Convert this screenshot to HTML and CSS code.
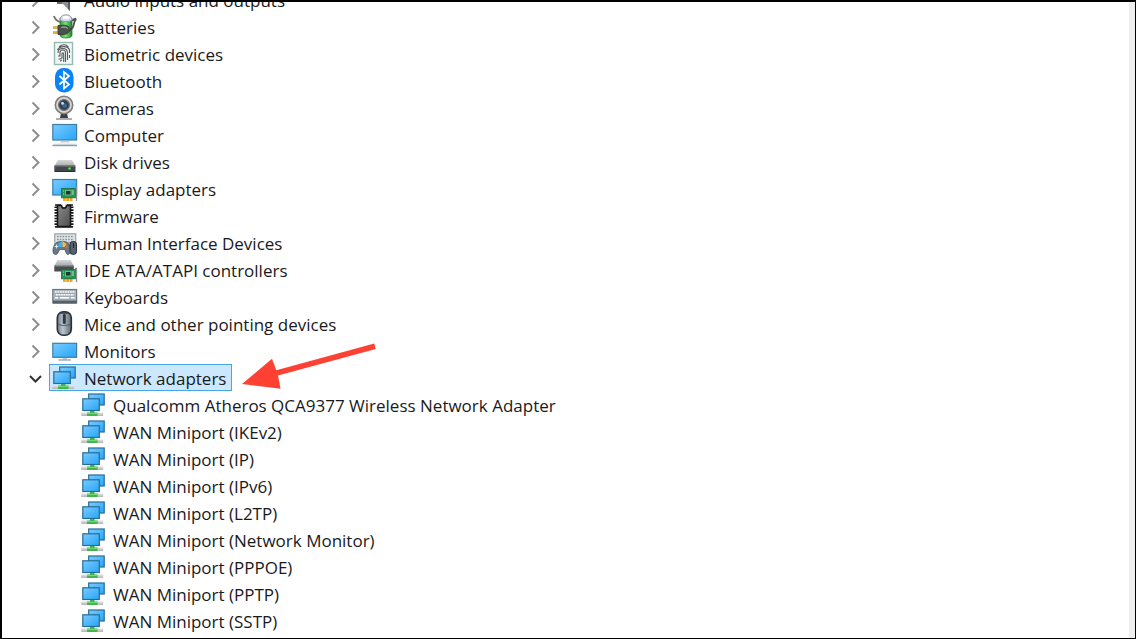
FILE: index.html
```html
<!DOCTYPE html>
<html lang="en">
<head>
<meta charset="utf-8">
<title>Device Manager</title>
<link rel="stylesheet" href="styles.css">
</head>
<body>
<svg class="sprite" aria-hidden="true">
  <defs>
    <linearGradient id="screen" x1="0" y1="0" x2="1" y2="1"><stop offset="0" stop-color="#7ecbff"/><stop offset=".5" stop-color="#4fb8fc"/><stop offset="1" stop-color="#2ba4f5"/></linearGradient>
    <linearGradient id="metal" x1="0" y1="0" x2="0" y2="1"><stop offset="0" stop-color="#d8d8d8"/><stop offset="1" stop-color="#a9abac"/></linearGradient>
    <linearGradient id="dark" x1="0" y1="0" x2="1" y2="1"><stop offset="0" stop-color="#8b8b8b"/><stop offset="1" stop-color="#4c4c4c"/></linearGradient>
    <linearGradient id="cell" x1="0" y1="0" x2="1" y2="0"><stop offset="0" stop-color="#2c9a33"/><stop offset=".45" stop-color="#7be07a"/><stop offset="1" stop-color="#1c8428"/></linearGradient>
    <linearGradient id="shell" x1="0" y1="0" x2="1" y2="0"><stop offset="0" stop-color="#6f7b86"/><stop offset=".4" stop-color="#b9c5d0"/><stop offset="1" stop-color="#5d6872"/></linearGradient>
    <linearGradient id="pipe" x1="0" y1="0" x2="0" y2="1"><stop offset="0" stop-color="#e4e4e4"/><stop offset="1" stop-color="#b4b4b4"/></linearGradient>
  </defs>
  <symbol id="chevron" viewBox="0 0 20 25"><path d="M6.500 7.500l6 6-6 6" fill="none" stroke="#8e8e8e" stroke-width="2"/></symbol>
  <symbol id="chevron-open" viewBox="0 0 20 25"><path d="M4 11l5.500 5.500L15 11" fill="none" stroke="#333" stroke-width="2"/></symbol>
  <symbol id="audio" viewBox="0 0 26 25">
    <path d="M5 8h5l8-7v23l-7-7H5z" fill="#8f9295"/><path d="M5 8h5v9H5z" fill="#686b6e"/><path d="M16 3l2-2v23l-2-2z" fill="#5b5e61"/>
  </symbol>
  <symbol id="battery" viewBox="0 0 26 25">
    <path d="M8 4v17c0 4 12 4 12 0V4z" fill="url(#cell)" stroke="#237b2c" stroke-width=".8"/>
    <path d="M8 6c0-7 12-7 12 0-2 2-10 2-12 0z" fill="#d9dcf2" stroke="#85889b" stroke-width=".8"/>
    <ellipse cx="14" cy="3.300" rx="3.500" ry="1.500" fill="#fff"/>
    <path d="M19 15c4-2 2-7 4.500-9 1-2-2-1.500-3 1" fill="none" stroke="#48504a" stroke-width="1.800"/>
    <path d="M2 2c1 4 3 5 6 6" fill="none" stroke="#6a706b" stroke-width="1.800"/>
    <path d="M1 13.500h6M1 18.500h6" stroke="#c59820" stroke-width="2.400"/>
    <path d="M1 13h5M1 18h5" stroke="#f2cc54" stroke-width="1"/>
    <path d="M6 11.500h3c5-1 8 1 10 3.500-2 4-5 6-10 5.500H6z" fill="#4b504d" stroke="#2e322f" stroke-width=".8"/>
    <path d="M9 13.500c3-1 5-.5 7 1" fill="none" stroke="#9a9f9b" stroke-width="1.300"/>
  </symbol>
  <symbol id="finger" viewBox="0 0 26 25">
    <rect x="2.500" y="1.500" width="18" height="22" fill="#f3f8f7" stroke="#93b9b1" stroke-width="1.400"/>
    <g fill="none" stroke="#555b5b" stroke-width="1.100">
      <path d="M7 6c3-3 7-3 9.500 0M5.500 9c2-4 10-5 12 0v3M6 12c0-6 9.500-6 9.500 0v7M6 15h2v-3c0-4 5.500-4 5.500 0v9M6.500 18H8l2-1v-4c0-1.500 1.700-1.500 1.700 0v8M8 20l2-1M17.500 14v3"/>
    </g>
  </symbol>
  <symbol id="bluetooth" viewBox="0 0 26 25">
    <rect x="3" y="0" width="18.500" height="24.500" rx="8.500" fill="#0a84f5"/>
    <path d="M7.500 8l9.500 8.500-5 4V4l5 4-9.500 8.500" fill="none" stroke="#fff" stroke-width="1.700"/>
  </symbol>
  <symbol id="camera" viewBox="0 0 26 25">
    <path d="M9 18h6l1 5H8z" fill="#3e3e3e"/><path d="M4 24h16" stroke="#8d8d8d" stroke-width="1.400"/>
    <circle cx="12" cy="10" r="8.700" fill="#d3d4d4" stroke="#7d7d7d" stroke-width="1.600"/>
    <circle cx="12" cy="10" r="5.400" fill="#343b43" stroke="#6c7073" stroke-width="1.300"/>
    <circle cx="12.500" cy="10.500" r="2.500" fill="#38668d"/><circle cx="10.500" cy="8.300" r="1.500" fill="#b9d7ec"/>
  </symbol>
  <symbol id="computer" viewBox="0 0 26 25">
    <rect x=".8" y="2.500" width="23.800" height="15.500" fill="url(#screen)" stroke="#3e7ea5" stroke-width="1.200"/>
    <path d="M9 19h8l1 1.500H8z" fill="#c5ced4"/><path d="M2.500 21.500h20.500l1.500 1.500H1z" fill="#dce4e9"/><path d="M.5 23.500h24.500" stroke="#8ba1af" stroke-width="1.500"/>
  </symbol>
  <symbol id="disk" viewBox="0 0 26 25">
    <path d="M6 11h14l3.500 6H2.500z" fill="url(#metal)"/><rect x="2.300" y="16.500" width="21.200" height="6.500" rx=".6" fill="#45484a"/>
    <path d="M2.500 17h20.800" stroke="#7d8082"/><circle cx="17.500" cy="19.500" r="1.200" fill="#43ed43"/><path d="M3 22.500h20" stroke="#292b2c"/>
  </symbol>
  <symbol id="card" viewBox="0 0 26 25">
    <path d="M11 21.500h9.500V25H11z" fill="#f4a71c"/><path d="M14 22v3M17.500 22v3" stroke="#ffe08a" stroke-width=".8"/>
    <rect x="9.500" y="12.500" width="14" height="9.300" fill="#249254" stroke="#196c40" stroke-width=".8"/>
    <rect x="13.500" y="14.500" width="5.500" height="4.500" fill="#183c2c" stroke="#82bc93" stroke-width=".9"/>
    <path d="M11 15h1M11 18h1M21 14v5" stroke="#9be0a8" stroke-width="1.200"/><path d="M23 11.500h1.500V25" fill="none" stroke="#8a9195" stroke-width="1.300"/>
  </symbol>
  <symbol id="display" viewBox="0 0 26 25">
    <rect x=".8" y="3.500" width="23.800" height="15.500" fill="url(#screen)" stroke="#3e7ea5" stroke-width="1.200"/><use href="#card" width="26" height="25"/>
  </symbol>
  <symbol id="firmware" viewBox="0 0 26 25">
    <path d="M4.500 3.500v20M19.500 3.500v20" stroke="#151515" stroke-width="4" stroke-dasharray="1.600 1.200"/>
    <path d="M5.500 2.500h4c0 3.500 5 3.500 5 0h4v21h-13z" fill="url(#dark)" stroke="#191919" stroke-width="1.600"/>
    <path d="M3 2h6M15 2h6M3 24h18" stroke="#191919" stroke-width="1.500"/>
  </symbol>
  <symbol id="hid" viewBox="0 0 26 25">
    <rect x="2.800" y="3.800" width="21" height="12" fill="#dfe4e7" stroke="#8b959b"/>
    <path d="M5 6.500h17M5 9.500h17M5 12.500h17" stroke="#87929a" stroke-width="1.500" stroke-dasharray="1.600 1.200"/>
    <path d="M4.500 12.500c3-1.500 9-1.500 11 0 2.500 2 3 7 2 11-2 3-4-1-4.500-4H7.500c-1 3-3 7-6 4-1.500-4 .5-9 3-11z" fill="#66788a" stroke="#465462" stroke-width=".8"/>
    <path d="M4.500 14.500v4M2.500 16.500h4" stroke="#dbe4ec" stroke-width="1.200"/>
    <path d="M6.500 13l4-2v6h-4z" fill="#3ab4f1"/><path d="M10.500 11l4 3-2 3h-2z" fill="#f4bd40"/><circle cx="14.500" cy="17" r="1.400" fill="#df633e"/>
    <rect x="18" y="11.500" width="6.500" height="12.800" rx="2.600" fill="#56616b" stroke="#28313a"/><path d="M21.500 13v5" stroke="#1f2429"/>
  </symbol>
  <symbol id="ide" viewBox="0 0 26 25">
    <path d="M5.500 3h13l3 5.500h-19z" fill="url(#metal)"/><path d="M2.300 8.500h19.500v6H2.300z" fill="#4a4d4f"/><path d="M2.500 9h19" stroke="#888b8d"/><use href="#card" width="26" height="25"/>
  </symbol>
  <symbol id="keyboard" viewBox="0 0 26 25">
    <rect x=".8" y="5.500" width="23.800" height="13.500" fill="#b4bcc2" stroke="#697680" stroke-width="1.200"/>
    <path d="M1 18h23.500" stroke="#54616c" stroke-width="3"/>
    <path d="M3 8h20M4 10.800h18" stroke="#fff" stroke-width="1.700" stroke-dasharray="1.700 .8"/><path d="M3 13.800h3M8 13.800h9M19 13.800h3.500" stroke="#fff" stroke-width="1.700"/>
    <path d="M3 9.300h20M3 12.200h20M3 15.200h20" stroke="#8c979f" stroke-width=".7"/>
  </symbol>
  <symbol id="mouse" viewBox="0 0 26 25">
    <rect x="5.300" y=".8" width="14" height="23.400" rx="6" fill="url(#shell)" stroke="#2c3137" stroke-width="1.600"/>
    <path d="M6 13c3 2 9.500 2 12.500 0" fill="none" stroke="#4d5964"/><rect x="10.800" y="3" width="3" height="10" rx="1.300" fill="#33383d"/><path d="M8 2h8.500" stroke="#363b40" stroke-width="1.600"/>
  </symbol>
  <symbol id="monitor" viewBox="0 0 26 25">
    <rect x=".8" y="5.300" width="23.800" height="14" fill="url(#screen)" stroke="#3e7ea5" stroke-width="1.200"/>
    <path d="M10.500 20h4.500v1.500h-4.500z" fill="#bec8ce"/><path d="M6.500 22h12.500" stroke="#97a7b2" stroke-width="1.400"/>
  </symbol>
  <symbol id="network" viewBox="0 0 26 25">
    <rect x="7.700" y="2" width="15.500" height="11" fill="url(#screen)" stroke="#256d96" stroke-width="1.200"/>
    <path d="M.2 20.500h22V24H.2z" fill="url(#pipe)"/>
    <path d="M9 18h4.500v2.500h3V24H6v-3.500h3z" fill="#42b64c"/><path d="M6 21.500h10.500" stroke="#72d878"/>
    <rect x="1.800" y="6.800" width="16.500" height="11.700" fill="url(#screen)" stroke="#256d96" stroke-width="1.200"/>
  </symbol>
</svg>

<main class="window">
  <ul class="tree" role="tree" aria-label="Devices">
    <li class="row" role="treeitem"><button class="toggle" aria-label="Expand Audio inputs and outputs"><svg class="arrow-icon"><use href="#chevron"/></svg></button><span class="label"><svg class="icon"><use href="#audio"/></svg>Audio inputs and outputs</span></li>
    <li class="row" role="treeitem"><button class="toggle" aria-label="Expand Batteries"><svg class="arrow-icon"><use href="#chevron"/></svg></button><span class="label"><svg class="icon"><use href="#battery"/></svg>Batteries</span></li>
    <li class="row" role="treeitem"><button class="toggle" aria-label="Expand Biometric devices"><svg class="arrow-icon"><use href="#chevron"/></svg></button><span class="label"><svg class="icon"><use href="#finger"/></svg>Biometric devices</span></li>
    <li class="row" role="treeitem"><button class="toggle" aria-label="Expand Bluetooth"><svg class="arrow-icon"><use href="#chevron"/></svg></button><span class="label"><svg class="icon"><use href="#bluetooth"/></svg>Bluetooth</span></li>
    <li class="row" role="treeitem"><button class="toggle" aria-label="Expand Cameras"><svg class="arrow-icon"><use href="#chevron"/></svg></button><span class="label"><svg class="icon"><use href="#camera"/></svg>Cameras</span></li>
    <li class="row" role="treeitem"><button class="toggle" aria-label="Expand Computer"><svg class="arrow-icon"><use href="#chevron"/></svg></button><span class="label"><svg class="icon"><use href="#computer"/></svg>Computer</span></li>
    <li class="row" role="treeitem"><button class="toggle" aria-label="Expand Disk drives"><svg class="arrow-icon"><use href="#chevron"/></svg></button><span class="label"><svg class="icon"><use href="#disk"/></svg>Disk drives</span></li>
    <li class="row" role="treeitem"><button class="toggle" aria-label="Expand Display adapters"><svg class="arrow-icon"><use href="#chevron"/></svg></button><span class="label"><svg class="icon"><use href="#display"/></svg>Display adapters</span></li>
    <li class="row" role="treeitem"><button class="toggle" aria-label="Expand Firmware"><svg class="arrow-icon"><use href="#chevron"/></svg></button><span class="label"><svg class="icon"><use href="#firmware"/></svg>Firmware</span></li>
    <li class="row" role="treeitem"><button class="toggle" aria-label="Expand Human Interface Devices"><svg class="arrow-icon"><use href="#chevron"/></svg></button><span class="label"><svg class="icon"><use href="#hid"/></svg>Human Interface Devices</span></li>
    <li class="row" role="treeitem"><button class="toggle" aria-label="Expand IDE ATA/ATAPI controllers"><svg class="arrow-icon"><use href="#chevron"/></svg></button><span class="label"><svg class="icon"><use href="#ide"/></svg>IDE ATA/ATAPI controllers</span></li>
    <li class="row" role="treeitem"><button class="toggle" aria-label="Expand Keyboards"><svg class="arrow-icon"><use href="#chevron"/></svg></button><span class="label"><svg class="icon"><use href="#keyboard"/></svg>Keyboards</span></li>
    <li class="row" role="treeitem"><button class="toggle" aria-label="Expand Mice and other pointing devices"><svg class="arrow-icon"><use href="#chevron"/></svg></button><span class="label"><svg class="icon"><use href="#mouse"/></svg>Mice and other pointing devices</span></li>
    <li class="row" role="treeitem"><button class="toggle" aria-label="Expand Monitors"><svg class="arrow-icon"><use href="#chevron"/></svg></button><span class="label"><svg class="icon"><use href="#monitor"/></svg>Monitors</span></li>
    <li role="treeitem" aria-expanded="true" aria-selected="true">
      <div class="row">
        <button class="toggle" aria-label="Collapse Network adapters"><svg class="arrow-icon"><use href="#chevron-open"/></svg></button><span class="label selected"><svg class="icon"><use href="#network"/></svg>Network adapters</span>
        <svg class="pointer" viewBox="0 0 136 48" aria-hidden="true"><path d="M133.300 .5l1.400 5.600L37 32.500l2.500 13.300L1 41 31 15.700l4.300 11.500z" fill="#ff4134"/></svg>
      </div>
      <ul class="children" role="group">
        <li class="row" role="treeitem"><span class="label"><svg class="icon"><use href="#network"/></svg>Qualcomm Atheros QCA9377 Wireless Network Adapter</span></li>
        <li class="row" role="treeitem"><span class="label"><svg class="icon"><use href="#network"/></svg>WAN Miniport (IKEv2)</span></li>
        <li class="row" role="treeitem"><span class="label"><svg class="icon"><use href="#network"/></svg>WAN Miniport (IP)</span></li>
        <li class="row" role="treeitem"><span class="label"><svg class="icon"><use href="#network"/></svg>WAN Miniport (IPv6)</span></li>
        <li class="row" role="treeitem"><span class="label"><svg class="icon"><use href="#network"/></svg>WAN Miniport (L2TP)</span></li>
        <li class="row" role="treeitem"><span class="label"><svg class="icon"><use href="#network"/></svg>WAN Miniport (Network Monitor)</span></li>
        <li class="row" role="treeitem"><span class="label"><svg class="icon"><use href="#network"/></svg>WAN Miniport (PPPOE)</span></li>
        <li class="row" role="treeitem"><span class="label"><svg class="icon"><use href="#network"/></svg>WAN Miniport (PPTP)</span></li>
        <li class="row" role="treeitem"><span class="label"><svg class="icon"><use href="#network"/></svg>WAN Miniport (SSTP)</span></li>
      </ul>
    </li>
  </ul>
  <div class="scrollbar"></div>
</main>
</body>
</html>
```
FILE: styles.css
```css
* {
  box-sizing: border-box;
}

body {
  margin: 0;
  background: #fff;
  color: #1a1a1a;
  font-family: "Segoe UI", "Open Sans", "Noto Sans", sans-serif;
  font-size: 17px;
  line-height: 27px;
}

.sprite {
  position: absolute;
  width: 0;
  height: 0;
}

.window {
  display: flex;
  height: 100vh;
  overflow: hidden;
  border: solid #000;
  border-width: 2px 1px 1px 2px;
}

.tree {
  flex: 1;
  /* the list is scrolled part of the way into its first row */
  margin: -16px 0 0;
  padding: 0 0 0 24px;
  list-style: none;
}

.children {
  margin: 0;
  padding: 0 0 0 52px;
  list-style: none;
}

.row {
  display: flex;
  align-items: center;
  height: 27px;
}

.toggle {
  width: 20px;
  height: 25px;
  margin-right: 3px;
  padding: 0;
  border: 0;
  background: none;
}

.arrow-icon {
  display: block;
  width: 20px;
  height: 25px;
}

.label {
  display: flex;
  align-items: flex-start;
  gap: 6px;
  height: 27px;
  padding: 0 5px 0 2px;
  border: 1px solid transparent;
  white-space: nowrap;
}

.selected {
  border-color: #4aa5e6;
  background: #cce8ff;
}

.icon {
  flex: none;
  width: 26px;
  height: 25px;
}

.pointer {
  position: relative;
  flex: none;
  width: 136px;
  height: 48px;
  margin: -22px 0 0 9px;
}

.scrollbar {
  width: 6px;
  background: #eee;
}
```
